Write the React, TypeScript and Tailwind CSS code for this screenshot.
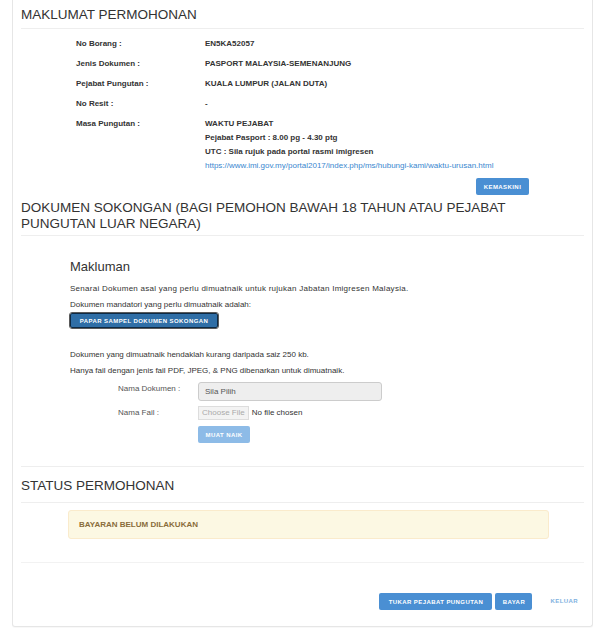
import React from "react";

const F = { fontFamily: '"Liberation Sans", Arial, sans-serif' };

function Row({ label, children }: { label: string; children: React.ReactNode }) {
  return (
    <div className="flex py-[3px] leading-[14px] text-[8px]">
      <div className="w-[129px] pl-[55px] font-bold text-[#333] shrink-0 box-content">{label}</div>
      <div className="font-bold text-[#333]">{children}</div>
    </div>
  );
}

function Btn({ children, className = "" }: { children: React.ReactNode; className?: string }) {
  return (
    <button
      className={
        "h-[17px] rounded-[2px] text-white font-bold text-[6px] tracking-[0.07em] leading-none whitespace-nowrap flex items-center justify-center " +
        className
      }
    >
      {children}
    </button>
  );
}

export default function App() {
  return (
    <div style={F} className="w-[600px] h-[637px] bg-white overflow-hidden">
      <div className="ml-[12px] w-[581px] border border-t-0 border-[#e6e6e6] rounded-b-[3px] px-[8px] pb-[16px] shadow-[0_1px_1px_rgba(0,0,0,0.03)]">
        {/* MAKLUMAT PERMOHONAN */}
        <div className="h-[28px] pt-[6px] text-[13.5px] leading-[18px] text-[#333]">MAKLUMAT PERMOHONAN</div>
        <div className="h-px bg-[#eee]" />
        <div className="pt-[5px]">
          <Row label="No Borang :">EN5KA52057</Row>
          <Row label="Jenis Dokumen :">PASPORT MALAYSIA-SEMENANJUNG</Row>
          <Row label="Pejabat Pungutan :">KUALA LUMPUR (JALAN DUTA)</Row>
          <Row label="No Resit :">-</Row>
          <Row label="Masa Pungutan :">
            <div>WAKTU PEJABAT</div>
            <div>Pejabat Pasport : 8.00 pg - 4.30 ptg</div>
            <div>UTC : Sila rujuk pada portal rasmi imigresen</div>
            <div className="font-normal text-[#3a87cf]">
              https://www.imi.gov.my/portal2017/index.php/ms/hubungi-kami/waktu-urusan.html
            </div>
          </Row>
        </div>
        <div className="flex justify-end pr-[55px] mt-[2px]">
          <Btn className="bg-[#4a8fd3] w-[53px]">KEMASKINI</Btn>
        </div>

        {/* DOKUMEN SOKONGAN */}
        <div className="pt-[5px] pb-[3px] text-[13.5px] leading-[16px] text-[#333]">
          DOKUMEN SOKONGAN (BAGI PEMOHON BAWAH 18 TAHUN ATAU PEJABAT
          <br />
          PUNGUTAN LUAR NEGARA)
        </div>
        <div className="h-px bg-[#eee]" />
        <div className="pl-[49px] text-[8px] text-[#333]">
          <div className="pt-[22px] text-[13px] leading-[18px]">Makluman</div>
          <div className="mt-[5px] leading-[16px] tracking-[0.27px]">
            Senarai Dokumen asal yang perlu dimuatnaik untuk rujukan Jabatan Imigresen Malaysia.
          </div>
          <div className="leading-[16px]">Dokumen mandatori yang perlu dimuatnaik adalah:</div>
          <button className="h-[15px] w-[148px] rounded-[2px] bg-[#2f6ea6] border border-[#0e2a44] outline outline-1 outline-[#5a5a5a] text-white font-bold text-[6px] tracking-[0.07em] leading-none whitespace-nowrap">
            PAPAR SAMPEL DOKUMEN SOKONGAN
          </button>
          <div className="mt-[19px] leading-[16px]">Dokumen yang dimuatnaik hendaklah kurang daripada saiz 250 kb.</div>
          <div className="leading-[16px]">Hanya fail dengan jenis fail PDF, JPEG, &amp; PNG dibenarkan untuk dimuatnaik.</div>
          <div className="flex items-center mt-[3px]">
            <div className="w-[80px] pl-[48px] box-content text-[#555] -mt-[5px]">Nama Dokumen :</div>
            <div className="w-[184px] h-[19px] bg-[#eee] border border-[#ccc] rounded-[3px] flex items-center pl-[6px] text-[#555]">
              Sila Pilih
            </div>
          </div>
          <div className="flex items-center mt-[5px]">
            <div className="w-[80px] pl-[48px] box-content text-[#555]">Nama Fail :</div>
            <div className="flex items-center">
              <span className="h-[14px] px-[3px] border border-[#ddd] bg-[#f3f3f3] text-[#aaa] flex items-center">Choose File</span>
              <span className="ml-[3px] text-[#333]">No file chosen</span>
            </div>
          </div>
          <div className="flex mt-[6px]">
            <div className="w-[128px] shrink-0" />
            <Btn className="bg-[#8dbbe7] w-[52px] h-[16px]">MUAT NAIK</Btn>
          </div>
        </div>
        <div className="h-px bg-[#eee] mt-[23px]" />

        {/* STATUS */}
        <div className="pt-[11px] pb-[8px] text-[13.5px] leading-[16px] text-[#333]">STATUS PERMOHONAN</div>
        <div className="h-px bg-[#eee]" />
        <div className="mt-[7px] ml-[47px] w-[481px] h-[29px] bg-[#fcf8e3] border border-[#faebcc] rounded-[3px] flex items-center pl-[10px] text-[8px] font-bold text-[#8a6d3b]">
          BAYARAN BELUM DILAKUKAN
        </div>
        <div className="h-px bg-[#f2f2f2] mt-[23px]" />
        <div className="flex items-center justify-end mt-[30px] pr-[6px]">
          <Btn className="bg-[#4a8fd3] w-[113px]">TUKAR PEJABAT PUNGUTAN</Btn>
          <Btn className="bg-[#4a8fd3] w-[37px] ml-[3px]">BAYAR</Btn>
          <span className="ml-[18px] text-[6px] font-bold tracking-[0.07em] text-[#7eb1e0]">KELUAR</span>
        </div>
      </div>
    </div>
  );
}
